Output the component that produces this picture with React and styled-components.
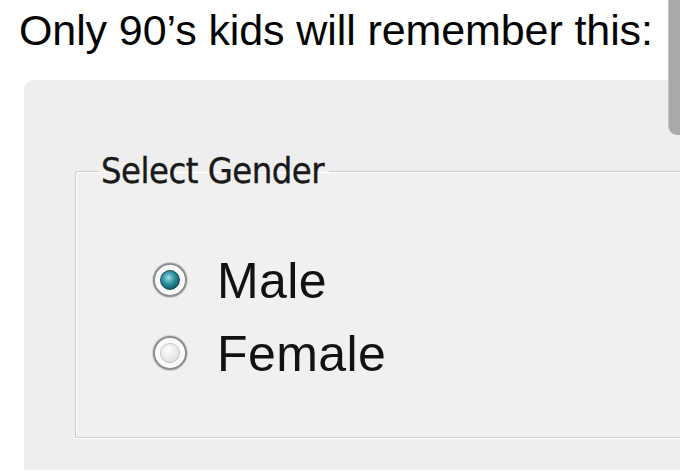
import React from "react";
import styled, { createGlobalStyle } from "styled-components";

const GlobalStyle = createGlobalStyle`
  html, body {
    margin: 0;
    padding: 0;
    background: #ffffff;
  }
  body {
    width: 680px;
    height: 476px;
    overflow: hidden;
    font-family: "Liberation Sans", Arial, sans-serif;
  }
`;

const Page = styled.div`
  position: relative;
  width: 680px;
  height: 476px;
  background: #ffffff;
  display: flex;
  flex-direction: column;
  overflow: hidden;
`;

const Caption = styled.h1`
  margin: 5px 0 0 0;
  padding-left: 19px;
  font-family: "Liberation Sans", Arial, sans-serif;
  font-weight: 400;
  font-size: 43px;
  line-height: 50px;
  color: #050505;
  letter-spacing: -0.1px;
`;

const ScrollThumb = styled.div`
  position: absolute;
  top: 0;
  right: 0;
  width: 11px;
  height: 135px;
  background: #a9a9a9;
  border-left: 1px solid #c4c4c4;
  border-bottom-left-radius: 9px;
`;

const Window = styled.div`
  margin: 25px 0 0 24px;
  height: 390px;
  box-sizing: border-box;
  background: #eeeeee;
  border-top-left-radius: 10px;
  border-bottom-left-radius: 3px;
  padding: 0 0 0 51px;
  display: flex;
  flex-direction: column;
`;

/* etched group box: grey line with a white highlight beside it */
const GroupBox = styled.fieldset`
  margin: 73px -4px 0 0;
  padding: 56px 0 46px 23px;
  border: 1px solid #cdcdcd;
  border-right: none;
  border-radius: 3px 0 0 3px;
  box-shadow: inset 1px 1px 0 #ffffff, 0 1px 0 #ffffff;
  background: #f0f0f0;
  min-width: 0;
`;

const GroupTitle = styled.legend`
  padding: 0 5px 0 2px;
  font-family: "DejaVu Sans", Tahoma, Verdana, sans-serif;
  font-stretch: condensed;
  font-size: 36px;
  line-height: 36px;
  color: #1a1a1a;
  letter-spacing: -0.5px;
  -webkit-text-stroke: 0.35px #1a1a1a;
`;

const Options = styled.div`
  display: flex;
  flex-direction: column;
  margin-left: 54px;
`;

const Option = styled.label`
  display: flex;
  align-items: center;
  gap: 30px;
  height: 73px;
  font-family: "Liberation Sans", Arial, sans-serif;
  font-size: 50px;
  line-height: 73px;
  letter-spacing: 0.4px;
  color: #121212;
  cursor: default;
`;

const Radio = styled.input.attrs({ type: "radio" })`
  appearance: none;
  -webkit-appearance: none;
  margin: 0;
  flex: none;
  width: 34px;
  height: 34px;
  border-radius: 50%;
  box-sizing: border-box;
  border: 2px solid #8e8e8e;
  background: #fafafa;
  box-shadow: 0 0 0 1px #d2d2d2, inset 0 0 0 1px #ffffff;
  display: grid;
  place-items: center;
  transform: translateY(-2px);

  &::before {
    content: "";
    width: 20px;
    height: 20px;
    border-radius: 50%;
    box-sizing: border-box;
    border: 1.5px solid #c4c4c4;
    background: radial-gradient(circle at 40% 35%, #fdfdfd 0%, #e9e9e9 55%, #d4d4d4 100%);
  }

  &:checked::before {
    border-color: #1f4d57;
    background: radial-gradient(circle at 42% 38%, #9fe0ea 0%, #3a9aab 35%, #0f5a68 75%, #0a3d47 100%);
  }
`;

const genders = ["Male", "Female"];

export default function App() {
  const [choice, setChoice] = React.useState("Male");
  return (
    <>
      <GlobalStyle />
      <Page>
        <Caption>Only 90’s kids will remember this:</Caption>
        <Window>
          <GroupBox>
            <GroupTitle>Select Gender</GroupTitle>
            <Options>
              {genders.map((g) => (
                <Option key={g}>
                  <Radio
                    name="gender"
                    value={g}
                    checked={choice === g}
                    onChange={() => setChoice(g)}
                  />
                  {g}
                </Option>
              ))}
            </Options>
          </GroupBox>
        </Window>
        <ScrollThumb />
      </Page>
    </>
  );
}
